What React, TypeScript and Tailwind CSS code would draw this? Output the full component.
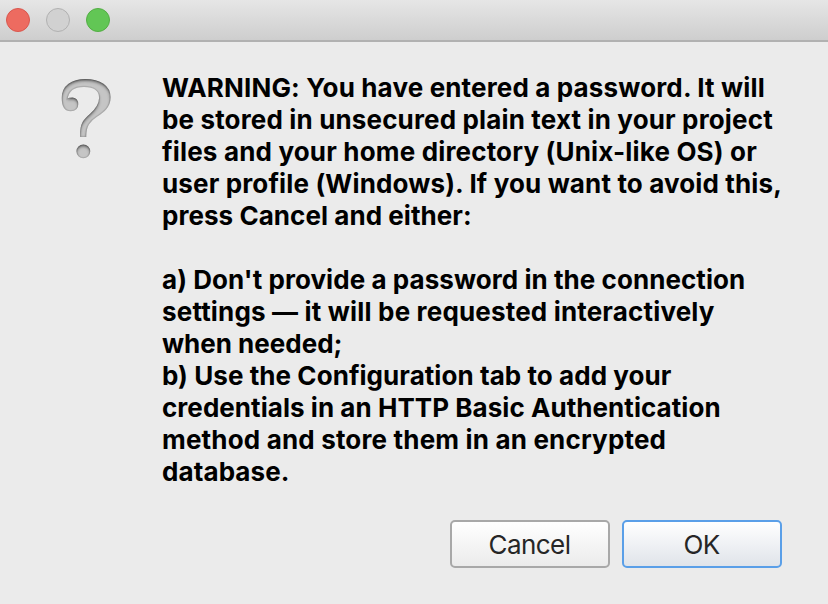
import clsx from 'clsx';

const LINES = [
  { text: 'WARNING: You have entered a password. It will', tracking: 'tracking-[0.15px]' },
  { text: 'be stored in unsecured plain text in your project', tracking: 'tracking-[0.15px]' },
  { text: 'files and your home directory (Unix-like OS) or', tracking: 'tracking-[0.17px]' },
  { text: 'user profile (Windows). If you want to avoid this,', tracking: 'tracking-[0.14px]' },
  { text: 'press Cancel and either:', tracking: 'tracking-[0.05px]' },
  { text: '', tracking: '' },
  { text: "a) Don't provide a password in the connection", tracking: 'tracking-[0.06px]' },
  { text: 'settings — it will be requested interactively', tracking: 'tracking-[0.17px]' },
  { text: 'when needed;', tracking: 'tracking-[0px]' },
  { text: 'b) Use the Configuration tab to add your', tracking: 'tracking-[0.06px]' },
  { text: 'credentials in an HTTP Basic Authentication', tracking: 'tracking-[0.05px]' },
  { text: 'method and store them in an encrypted', tracking: 'tracking-[0.17px]' },
  { text: 'database.', tracking: 'tracking-[0.1px]' },
];

function TitleBar() {
  return (
    <div className="flex h-[42px] shrink-0 items-start gap-4 border-b-2 border-[#b1b1b1] bg-linear-to-b from-[#e6e6e6] to-[#cecece] pl-1.5 pt-2">
      <div className="size-6 rounded-full border border-[#d9574e] bg-[#ed6b60]" />
      <div className="size-6 rounded-full border border-[#b1b1b1] bg-[#d1d1d1]" />
      <div className="size-6 rounded-full border border-[#53ae44] bg-[#62c655]" />
    </div>
  );
}

function QuestionIcon() {
  return (
    <svg className="h-[100px] w-[75px] shrink-0" viewBox="0 0 225 300">
      <defs>
        <filter id="engraved" x="-10%" y="-10%" width="120%" height="120%">
          <feGaussianBlur in="SourceAlpha" stdDeviation="4" result="blur" />
          <feOffset in="blur" dx="0" dy="5" result="shifted" />
          <feComposite in="SourceAlpha" in2="shifted" operator="out" result="inner" />
          <feFlood floodColor="#2c2c2c" floodOpacity="0.9" />
          <feComposite in2="inner" operator="in" result="shade" />
          <feMerge>
            <feMergeNode in="SourceGraphic" />
            <feMergeNode in="shade" />
          </feMerge>
        </filter>
      </defs>
      <g fill="#c5c5c5" stroke="#b0b0b0" strokeWidth="3.5" filter="url(#engraved)">
        <path d="M92 199C90 160 104 148 122 132C138 117 149 103 149 83C149 62 132 49 102 49C75 49 54 60 51 88C54 86 60 84 68 84C78 85 83 94 83 103C83 115 75 122 62 122C45 122 37 106 37 84C37 48 66 29 106 29C150 29 180 48 180 82C180 112 160 126 140 139C118 153 107 168 107 199Z" />
        <circle cx="100" cy="244" r="19" />
      </g>
    </svg>
  );
}

export default function App() {
  return (
    <div className="flex h-[604px] w-[828px] flex-col overflow-hidden bg-[#ebebeb] font-['Inter',sans-serif]">
      <TitleBar />
      <div className="flex pl-[50px] pt-7">
        <QuestionIcon />
        <div className="ml-[37px] mt-0.5 text-[26px] leading-8 font-bold text-black">
          {LINES.map((line, i) => (
            <p key={i} className={clsx('h-8 whitespace-nowrap', line.tracking)}>
              {line.text}
            </p>
          ))}
        </div>
      </div>
      <div className="mt-8 flex justify-end gap-3 pr-[46px] text-[26px] tracking-[-0.55px] text-[#262626]">
        <button className="h-12 w-40 rounded-[5px] border-2 border-[#a8a8a8] bg-linear-to-b from-white to-[#ebebeb] pt-px pr-px">
          Cancel
        </button>
        <button className="h-12 w-40 rounded-[5px] border-2 border-[#5a9fe8] bg-linear-to-b from-white to-[#e0e4ea] pt-px pr-px">
          OK
        </button>
      </div>
    </div>
  );
}
